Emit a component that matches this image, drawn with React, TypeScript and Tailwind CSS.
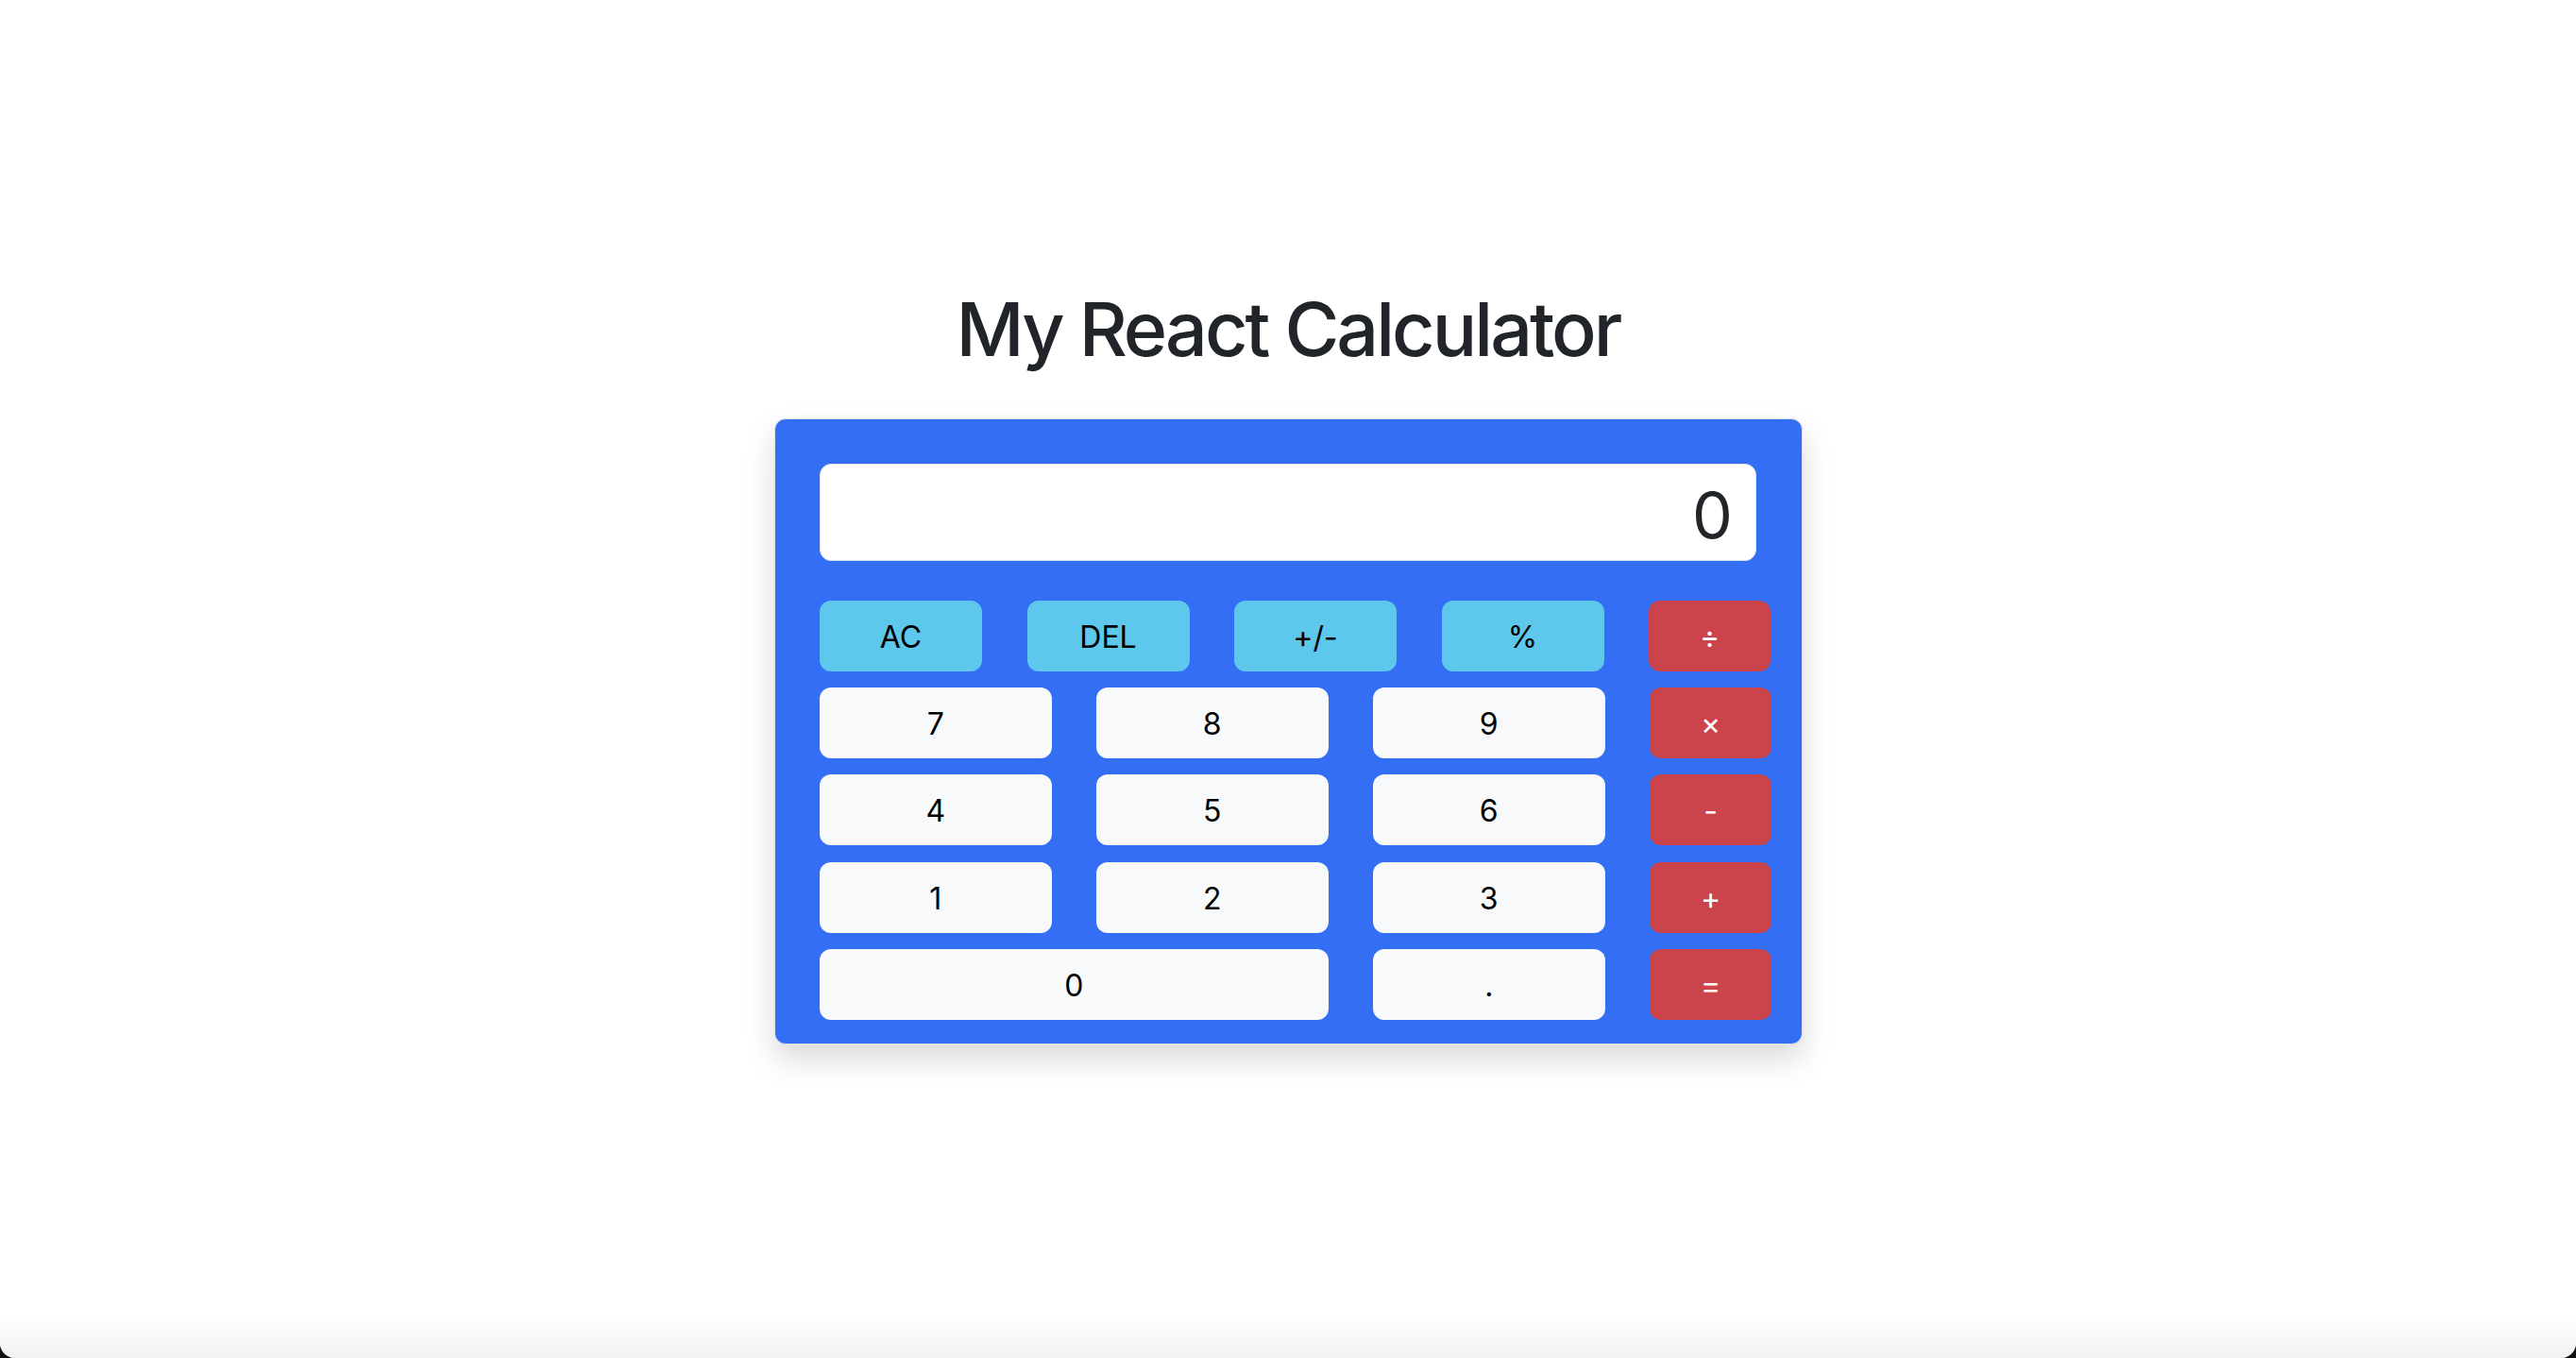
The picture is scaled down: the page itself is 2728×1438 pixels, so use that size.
import React from "react";

const font = { fontFamily: "Inter, 'Noto Sans', 'Liberation Sans', sans-serif" };

function Btn({
  label,
  kind,
  w,
}: {
  label: string;
  kind: "fn" | "num" | "op";
  w: string;
}) {
  const colors =
    kind === "fn"
      ? "bg-[#5ec7ec] text-black"
      : kind === "op"
      ? "bg-[#cc444b] text-white"
      : "bg-[#f8f9fa] text-black";
  return (
    <button
      className={`${w} h-[75px] shrink-0 rounded-[12px] text-[32px] leading-none flex items-center justify-center pt-[3px] ${colors}`}
    >
      {label}
    </button>
  );
}

export default function App() {
  const rows: { label: string; kind: "num" | "op"; w: string }[][] = [
    [
      { label: "7", kind: "num", w: "w-[245.5px]" },
      { label: "8", kind: "num", w: "w-[245.5px]" },
      { label: "9", kind: "num", w: "w-[245.5px]" },
      { label: "×", kind: "op", w: "w-[129px]" },
    ],
    [
      { label: "4", kind: "num", w: "w-[245.5px]" },
      { label: "5", kind: "num", w: "w-[245.5px]" },
      { label: "6", kind: "num", w: "w-[245.5px]" },
      { label: "-", kind: "op", w: "w-[129px]" },
    ],
    [
      { label: "1", kind: "num", w: "w-[245.5px]" },
      { label: "2", kind: "num", w: "w-[245.5px]" },
      { label: "3", kind: "num", w: "w-[245.5px]" },
      { label: "+", kind: "op", w: "w-[129px]" },
    ],
    [
      { label: "0", kind: "num", w: "w-[538.5px]" },
      { label: ".", kind: "num", w: "w-[245.5px]" },
      { label: "=", kind: "op", w: "w-[129px]" },
    ],
  ];

  return (
    <div className="w-full h-screen bg-[#111111]" style={font}>
      <div className="relative w-full h-full bg-white rounded-b-[16px] overflow-hidden flex flex-col items-center">
        <h1 className="mt-[301px] text-[79px] leading-[1.2] font-medium text-[#212529] tracking-[-0.038em] text-center">
          My React Calculator
        </h1>
        <div className="mt-[47px] w-[1089px] rounded-[12px] border border-[#dee2e6] bg-[#336ef5] pt-[47px] pl-[47.5px] pb-[25px] shadow-[0_16px_32px_rgba(0,0,0,0.15)]">
          <div className="w-[992px] h-[103px] rounded-[12px] bg-white border border-[#dee2e6] flex items-center justify-end pr-[24px] pt-[6px]">
            <span className="text-[68px] leading-none text-[#212529]">0</span>
          </div>
          <div className="mt-[42px] flex flex-col gap-[17.25px]">
            <div className="flex gap-[47.5px]">
              <Btn label="AC" kind="fn" w="w-[172px]" />
              <Btn label="DEL" kind="fn" w="w-[172px]" />
              <Btn label="+/-" kind="fn" w="w-[172px]" />
              <Btn label="%" kind="fn" w="w-[172px]" />
              <Btn label="÷" kind="op" w="w-[129px]" />
            </div>
            {rows.map((r, i) => (
              <div key={i} className="flex gap-[47.5px]">
                {r.map((b) => (
                  <Btn key={b.label} label={b.label} kind={b.kind} w={b.w} />
                ))}
              </div>
            ))}
          </div>
        </div>
        <div className="absolute left-0 right-0 bottom-0 h-[44px] bg-gradient-to-b from-white to-[#f1f1f1]" />
      </div>
    </div>
  );
}
